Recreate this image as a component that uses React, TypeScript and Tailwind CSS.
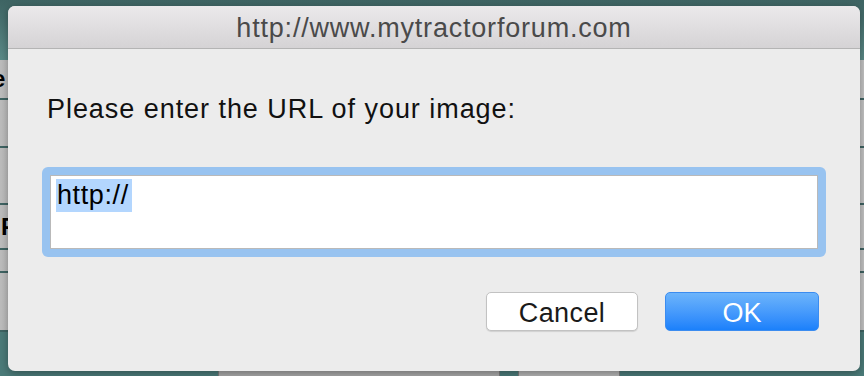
import React from 'react';

// Underlying page rows, visible only at the edges around the dialog
const rows = [
  { h: 40, label: 'e', shift: '-ml-[8px]' },
  { h: 48, label: '', shift: '' },
  { h: 57, label: '', shift: '' },
  { h: 45, label: 'F', shift: 'ml-[1px]' },
  { h: 23, label: '', shift: '' },
  { h: 59, label: '', shift: '' },
];

const font = { fontFamily: '"Liberation Sans", Arial, Helvetica, sans-serif' };

const App: React.FC = () => {
  return (
    <div className="relative w-[864px] h-[376px] overflow-hidden bg-[#4b7b79]" style={font}>
      {/* Background page */}
      <div className="flex flex-col">
        <div className="h-[60px] bg-gradient-to-b from-[#3e6463] to-[#5b8b88]" />
        {rows.map((r, i) => (
          <div
            key={i}
            className="flex items-center border-b-2 border-[#3f6463] bg-gradient-to-r from-[#bdbdbd] via-[#d6d6d6] to-[#c4c4c4]"
            style={{ height: r.h }}
          >
            <span className={`${r.shift} text-[24px] font-bold text-black`}>{r.label}</span>
          </div>
        ))}
        <div className="flex gap-[18px] pl-[218px] pt-[26px]">
          <div className="w-[282px] h-[24px] border border-[#7a7a7a] bg-[#a8a8a8]" />
          <div className="w-[102px] h-[24px] border border-[#7a7a7a] bg-[#b4b4b4]" />
        </div>
      </div>

      {/* Prompt dialog */}
      <div className="absolute left-[8px] top-[6px] w-[852px] h-[365px] rounded-[7px] bg-[#ececec] shadow-[0_2px_8px_rgba(0,0,0,0.35)] overflow-hidden flex flex-col">
        <div className="h-[43px] shrink-0 flex items-center justify-center border-b border-[#b4b4b4] bg-gradient-to-b from-[#ebe9eb] to-[#d5d3d5]">
          <span className="text-[27px] tracking-[0.8px] text-[#4a4a4a] leading-none mt-[2px]">http://www.mytractorforum.com</span>
        </div>

        <div className="flex flex-col px-[34px] pt-[44px]">
          <p className="pl-[5px] text-[27px] tracking-[0.95px] leading-[32px] text-[#111]">Please enter the URL of your image:</p>

          <div className="mt-[42px] rounded-[6px] bg-[#98c3f0] p-[8px]">
            <div className="h-[74px] border border-[#b9b9b9] bg-white px-[5px] pt-[3px]">
              <span className="inline-block bg-[#b3d6fe] text-[27px] tracking-[0.6px] leading-[33px] text-black pl-[1px] pr-[3px]">http://</span>
            </div>
          </div>

          <div className="mt-[35px] flex justify-end gap-[27px] pr-[7px]">
            <button className="w-[152px] h-[39px] rounded-[5px] border border-[#c2c2c2] bg-white text-[27px] tracking-[0.4px] text-[#1a1a1a] shadow-[0_1px_1px_rgba(0,0,0,0.12)]">
              Cancel
            </button>
            <button className="w-[154px] h-[39px] rounded-[5px] border border-[#3b8cf0] bg-gradient-to-b from-[#6cb4fb] to-[#1a80fb] text-[27px] text-white">
              OK
            </button>
          </div>
        </div>
      </div>
    </div>
  );
};

export default App;
